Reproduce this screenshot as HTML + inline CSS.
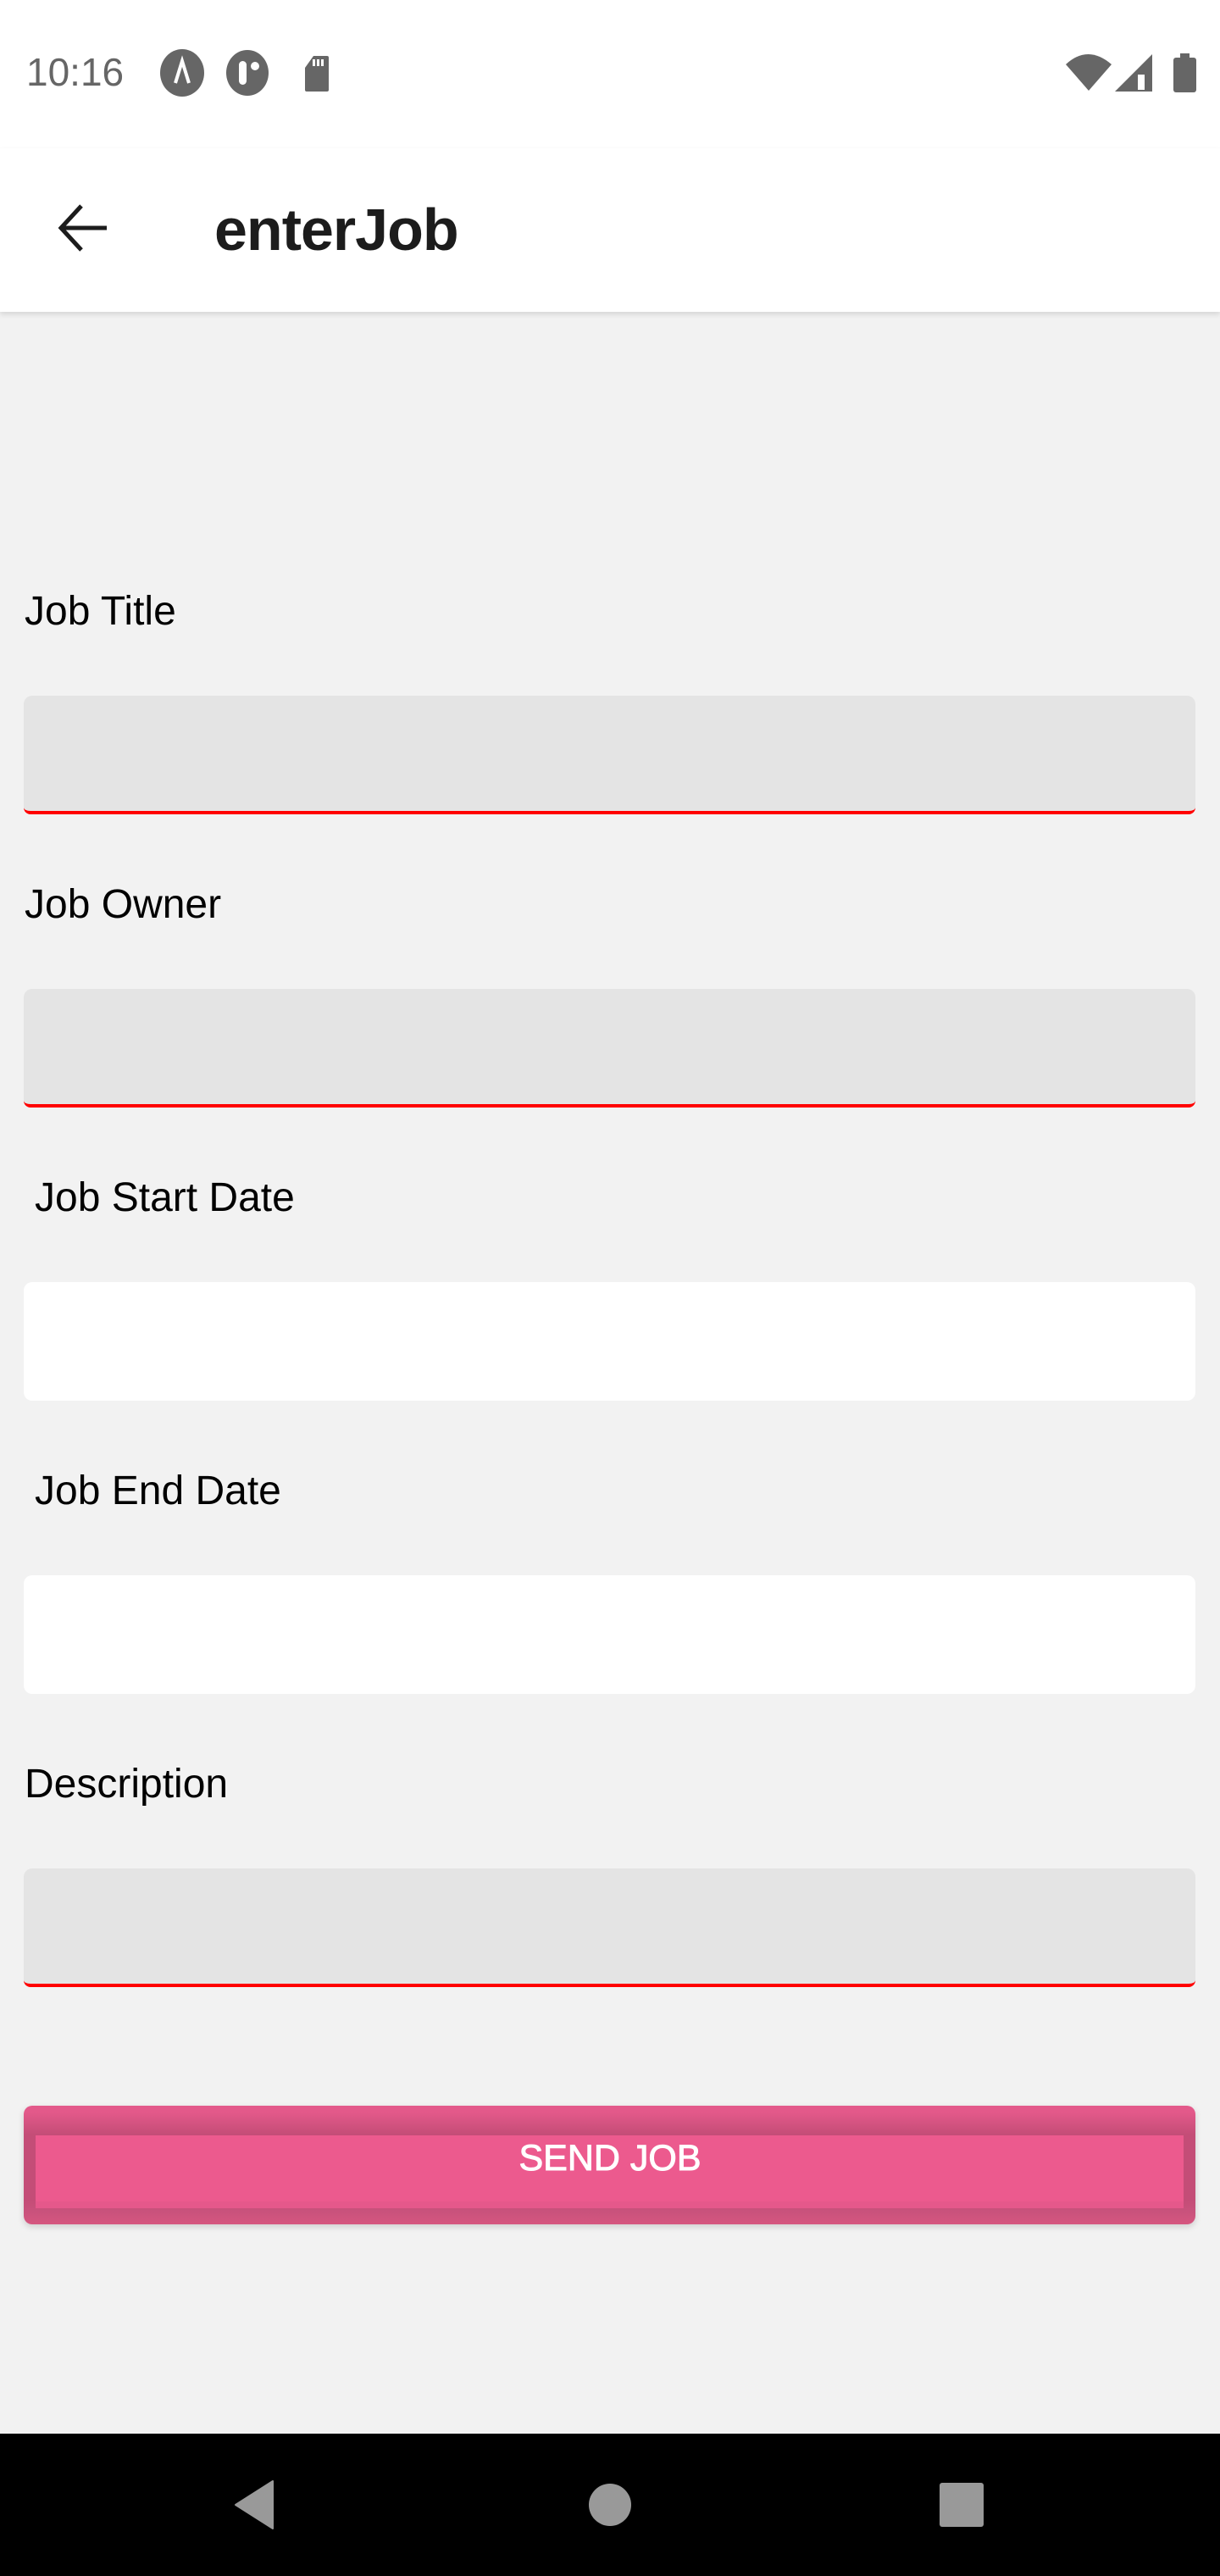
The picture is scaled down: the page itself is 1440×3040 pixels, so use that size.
<!DOCTYPE html>
<html><head><meta charset="utf-8"><style>
*{margin:0;padding:0;box-sizing:border-box}
body{width:1440px;height:3040px;background:#f2f2f2;font-family:"Liberation Sans",sans-serif;position:relative;overflow:hidden}
.abs{position:absolute}
.status{left:0;top:0;width:1440px;height:175px;background:#fff}
.appbar{left:0;top:175px;width:1440px;height:193px;background:#fff;box-shadow:0 3px 6px rgba(0,0,0,.12)}
.lbl{position:absolute;font-size:48px;color:#000;line-height:1}
.box{position:absolute;left:28px;width:1383px;height:140px;border-radius:10px}
.gray{background:#e4e4e4;border-bottom:4px solid #f00;border-radius:10px 10px 8px 8px}
.white{background:#fff}
</style></head><body>
<div class="abs status"></div>
<div class="abs" style="left:31px;top:62px;font-size:46px;color:#666;line-height:1">10:16</div>
<svg class="abs" style="left:185px;top:58px" width="220" height="56" viewBox="0 0 220 56">
<ellipse cx="30" cy="28" rx="26" ry="28" fill="#666"/>
<path d="M22 40 L30 14 L38 40" stroke="#fff" stroke-width="4" fill="none"/>
<ellipse cx="107" cy="28" rx="25" ry="27" fill="#666"/>
<rect x="97" y="14" width="9" height="28" rx="4.5" fill="#fff"/>
<circle cx="116" cy="20" r="5" fill="#fff"/>
<path d="M175 22 L185 8 H201 Q203 8 203 10 V48 Q203 50 201 50 H177 Q175 50 175 48 Z" fill="#666"/>
<rect x="184" y="12" width="3" height="8" fill="#fff"/><rect x="189" y="12" width="3" height="8" fill="#fff"/><rect x="194" y="12" width="3" height="8" fill="#fff"/>
</svg>
<svg class="abs" style="left:1256px;top:60px" width="160" height="52" viewBox="0 0 160 52">
<path d="M2 16 Q28 -8 56 16 L29 47 Z" fill="#666"/>
<path d="M60 48 L104 4 V48 Z" fill="#666"/>
<rect x="87" y="28" width="8" height="18" fill="#fff"/>
<rect x="129" y="8" width="27" height="41" rx="3" fill="#666"/>
<rect x="137" y="3" width="11" height="6" fill="#666"/>
</svg>
<div class="abs appbar"></div>
<svg class="abs" style="left:68px;top:240px" width="60" height="60" viewBox="0 0 60 60">
<path d="M58 29 H6 M28 3 L4 29 L28 55" stroke="#1c1c1c" stroke-width="5" fill="none"/>
</svg>
<div class="abs" style="left:253px;top:236px;font-size:70px;font-weight:bold;color:#1c1c1c;line-height:1;letter-spacing:-1px">enterJob</div>

<div class="lbl" style="left:29px;top:698px">Job Title</div>
<div class="box gray" style="top:821px"></div>
<div class="lbl" style="left:29px;top:1044px">Job Owner</div>
<div class="box gray" style="top:1167px"></div>
<div class="lbl" style="left:41px;top:1390px">Job Start Date</div>
<div class="box white" style="top:1513px"></div>
<div class="lbl" style="left:41px;top:1736px">Job End Date</div>
<div class="box white" style="top:1859px"></div>
<div class="lbl" style="left:29px;top:2082px">Description</div>
<div class="box gray" style="top:2205px"></div>

<div class="abs" style="left:28px;top:2485px;width:1383px;height:140px;border-radius:10px;background:linear-gradient(#e3598a 0,#e3598a 8px,#c44d77 34px,#c44d77 112px,#c9527c 125px,#d6567f 140px);box-shadow:0 3px 8px rgba(0,0,0,.15)"></div>
<div class="abs" style="left:42px;top:2520px;width:1355px;height:86px;background:linear-gradient(#ec5a8e 0,#ec5a8e 78px,#e5588b 78px)"></div>
<div class="abs" style="left:0;top:2526px;width:1440px;text-align:center;font-size:43px;color:#fff;line-height:1;-webkit-text-stroke:1px #fff">SEND JOB</div>

<div class="abs" style="left:0;top:2872px;width:1440px;height:168px;background:#000"></div>
<svg class="abs" style="left:0;top:2900px" width="1440" height="120" viewBox="0 0 1440 120">
<path d="M322 28 V84 L278 56 Z" fill="#999" stroke="#999" stroke-width="2" stroke-linejoin="round"/>
<circle cx="720" cy="56" r="25" fill="#999"/>
<rect x="1109" y="30" width="52" height="52" rx="3" fill="#999"/>
</svg>
</body></html>
